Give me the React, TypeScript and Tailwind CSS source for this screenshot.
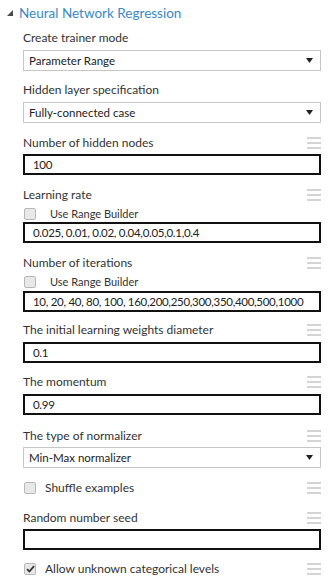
import React from "react";

const FONT = { fontFamily: 'Lato, "Open Sans", sans-serif' };

function Hamburger() {
  return (
    <div className="flex flex-col gap-[3px] w-[14px]">
      <div className="h-[2px] bg-[#d4d4d4]" />
      <div className="h-[2px] bg-[#d4d4d4]" />
      <div className="h-[2px] bg-[#d4d4d4]" />
    </div>
  );
}

function Label({ text, menu = true, mt }: { text: string; menu?: boolean; mt: string }) {
  return (
    <div className={`flex items-center justify-between h-[16px] ${mt}`}>
      <span className="text-[12px] leading-[16px] text-[#333] whitespace-nowrap">{text}</span>
      {menu && <Hamburger />}
    </div>
  );
}

function Select({ value, mt }: { value: string; mt: string }) {
  return (
    <div className={`flex items-center justify-between h-[21px] border border-[#c6c6c6] bg-white pl-[5px] pr-[7px] ${mt}`}>
      <span className="text-[11.5px] leading-[16px] text-[#222] whitespace-nowrap">{value}</span>
      <svg width="7" height="5" viewBox="0 0 7 5">
        <polygon points="0,0 7,0 3.5,5" fill="#222" />
      </svg>
    </div>
  );
}

function Input({ value, mt }: { value: string; mt: string }) {
  return (
    <div className={`flex items-center h-[21px] border-2 border-[#111] bg-white pl-[8px] ${mt}`}>
      <span className="text-[11.5px] leading-[16px] text-[#222] whitespace-nowrap tracking-[-0.3px]">{value}</span>
    </div>
  );
}

function Checkbox({ checked }: { checked?: boolean }) {
  return (
    <div className="w-[12px] h-[12px] rounded-[2px] border border-[#b8b8b8] bg-[#e8e8e8] flex items-center justify-center">
      {checked && (
        <svg width="9" height="8" viewBox="0 0 9 8">
          <path d="M1 4.2 L3.4 6.5 L8 1.2" stroke="#333" strokeWidth="1.8" fill="none" />
        </svg>
      )}
    </div>
  );
}

function RangeRow({ mt }: { mt: string }) {
  return (
    <div className={`flex items-center h-[16px] ${mt}`}>
      <div className="ml-[1px]">
        <Checkbox />
      </div>
      <span className="ml-[14px] text-[11px] leading-[16px] text-[#333] whitespace-nowrap">Use Range Builder</span>
    </div>
  );
}

function CheckRow({ text, checked, mt }: { text: string; checked?: boolean; mt: string }) {
  return (
    <div className={`flex items-center justify-between h-[16px] ${mt}`}>
      <div className="flex items-center">
        <div className="ml-[1px]">
          <Checkbox checked={checked} />
        </div>
        <span className="ml-[9px] text-[12px] leading-[16px] text-[#333] whitespace-nowrap">{text}</span>
      </div>
      <Hamburger />
    </div>
  );
}

export default function App() {
  return (
    <div className="w-[333px] h-[584px] bg-white overflow-hidden" style={FONT}>
      <div className="flex items-center h-[26px] pl-[7px]">
        <svg width="6" height="6" viewBox="0 0 6 6">
          <polygon points="6,0 6,6 0,6" fill="#4a4a4a" />
        </svg>
        <span className="ml-[6px] text-[13.5px] leading-[18px] text-[#3a88c4] whitespace-nowrap">Neural Network Regression</span>
      </div>
      <div className="pl-[23px] pr-[12px] flex flex-col">
        <Label text="Create trainer mode" menu={false} mt="mt-[4px]" />
        <Select value="Parameter Range" mt="mt-[4px]" />
        <Label text="Hidden layer specification" menu={false} mt="mt-[11px]" />
        <Select value="Fully-connected case" mt="mt-[4px]" />
        <Label text="Number of hidden nodes" mt="mt-[12px]" />
        <Input value="100" mt="mt-[3px]" />
        <Label text="Learning rate" mt="mt-[12px]" />
        <RangeRow mt="mt-[3px]" />
        <Input value="0.025, 0.01, 0.02, 0.04,0.05,0.1,0.4" mt="mt-[0px]" />
        <Label text="Number of iterations" mt="mt-[12px]" />
        <RangeRow mt="mt-[3px]" />
        <Input value="10, 20, 40, 80, 100, 160,200,250,300,350,400,500,1000" mt="mt-[1px]" />
        <Label text="The initial learning weights diameter" mt="mt-[10px]" />
        <Input value="0.1" mt="mt-[4px]" />
        <Label text="The momentum" mt="mt-[11px]" />
        <Input value="0.99" mt="mt-[4px]" />
        <Label text="The type of normalizer" mt="mt-[13px]" />
        <Select value="Min-Max normalizer" mt="mt-[3px]" />
        <CheckRow text="Shuffle examples" mt="mt-[12px]" />
        <Label text="Random number seed" mt="mt-[14px]" />
        <Input value="" mt="mt-[3px]" />
        <CheckRow text="Allow unknown categorical levels" checked mt="mt-[11px]" />
      </div>
    </div>
  );
}
